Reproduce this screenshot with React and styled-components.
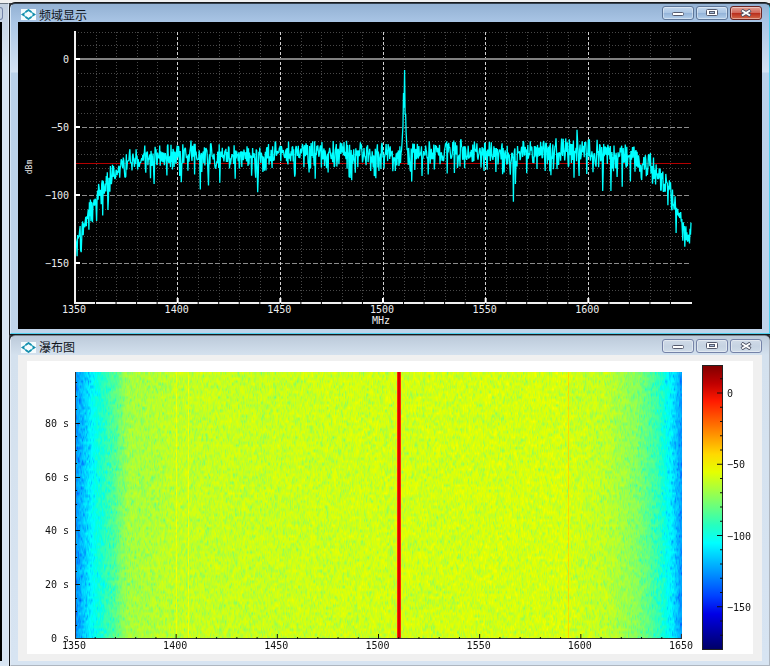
import React, { useEffect, useRef } from "react";
import styled, { createGlobalStyle } from "styled-components";

const GlobalStyle = createGlobalStyle`
  * {
    box-sizing: border-box;
  }

  body {
    margin: 0;
    background: #3c4046;
  }
`;

const Desktop = styled.div`
  display: grid;
  grid-template-columns: 9px minmax(0, 1fr);
  gap: 1px;
  border-top: 3px solid #f0f0f0;
`;

// The window on the left, only its right border is in view
const Neighbour = styled.div`
  display: flex;
  flex-direction: column;
  border-top: 1px solid #6b7682;
  border-right: 1px solid #dfe9f5;
  background: linear-gradient(180deg, #c3d0e0, #d8e5f3 60px);
`;

const NeighbourButton = styled.div`
  width: 3px;
  height: 13px;
  margin-top: 3px;
  border: 1px solid #7484a8;
  border-left: 0;
  border-radius: 0 3px 3px 0;
`;

const NeighbourBody = styled.div`
  flex: 1;
  width: 2px;
  margin: 2px 0 5px;
  background: #000;
`;

const Windows = styled.div`
  display: flex;
  flex-direction: column;
  gap: 1px;
`;

const Frame = styled.section`
  padding: 0 7px 4px;
  border: 1px solid ${({ $active }) => ($active ? "#4fd0ee" : "#aeb6c0")};
  border-top: 1px solid ${({ $active }) => ($active ? "#35424f" : "#7b858f")};
  border-left-color: ${({ $active }) => ($active ? "#d5e6f7" : "#e3ebf4")};
  border-radius: 5px 5px 0 0;
  outline: 1px solid #17191c;
  background: ${({ $active }) =>
    $active
      ? "linear-gradient(180deg, #93b1d3 0, #a9c5e5 18px, #d3e2f3 68px, #b9d1ea 69px, #bfd4ea 100%)"
      : "linear-gradient(180deg, #bccada 0, #d4e1ee 19px, #d7e4f2 100%)"};
`;

const TitleBar = styled.header`
  display: flex;
  align-items: center;
  gap: 3px;
  height: ${({ $active }) => ($active ? 18 : 19)}px;
  padding-left: 3px;
`;

const Title = styled.h1`
  flex: 1;
  margin: 0;
  padding-top: 5px;
  color: #10151c;
  font: 400 12px/14px "Liberation Sans", "Noto Sans CJK SC", sans-serif;
`;

const Logo = styled.svg`
  width: 15px;
  height: 11px;
  margin-top: 3px;
  background: #f4fbfd;
`;

const Controls = styled.div`
  display: flex;
  gap: 2px;
`;

const ControlButton = styled.button`
  display: flex;
  align-items: center;
  justify-content: center;
  width: 32px;
  height: 14px;
  padding: 0;
  border: 1px solid
    ${({ $active, $close }) => ($close && $active ? "#6b2422" : $active ? "#5d7699" : "#7583a8")};
  border-radius: 3px;
  background: ${({ $active, $close }) =>
    $close && $active
      ? "linear-gradient(180deg, #e0a094 0, #d1675a 48%, #b92d1c 52%, #d2694a 100%)"
      : $active
      ? "linear-gradient(180deg, #c3d7ee 0, #abc6e4 48%, #93b3d8 52%, #b4cfeb 100%)"
      : "linear-gradient(180deg, #d0dbe8 0, #c6d3e2 50%, #cfdbe8 100%)"};
  box-shadow: inset 0 0 0 1px rgba(255, 255, 255, 0.4);
`;

const PlotArea = styled.div`
  background: #000;
`;

const WaterfallArea = styled.div`
  padding: 6px 9px 7px;
  background: #f0f0f0;
`;

const Chart = styled.svg`
  display: block;
  width: 100%;
  height: auto;
  background: ${({ $light }) => ($light ? "#fff" : "#000")};
`;

const Label = styled.text`
  fill: ${({ $light }) => ($light ? "#111" : "#eee")};
  font-family: "DejaVu Sans Mono", "Liberation Mono", monospace;
  font-size: ${({ $small }) => ($small ? 8 : 10)}px;
`;

const HeatCanvas = styled.canvas`
  display: block;
  width: 100%;
  height: 100%;
`;

const createRandom = (start) => {
  let seed = start;
  return () => {
    seed = (seed * 1664525 + 1013904223) % 4294967296;
    return seed / 4294967296;
  };
};

const range = (from, to, step) => {
  const list = [];
  for (let v = from; v <= to; v += step) list.push(v);
  return list;
};

const minus = (value) => String(value).replace("-", "−");

// Noise floor along the band: [MHz, dBm]
const TRACE_FLOOR = [
  [1350, -131], [1353, -127], [1357, -111], [1362, -97], [1367, -86],
  [1372, -76], [1380, -72], [1400, -69], [1430, -70], [1460, -67],
  [1510, -67], [1560, -67], [1590, -65], [1605, -67], [1620, -70],
  [1630, -75], [1636, -86], [1641, -99], [1645, -117], [1648, -131],
  [1650, -126],
];

const HEAT_FLOOR = [
  [1350, -126], [1354, -116], [1360, -101], [1370, -82], [1376, -68],
  [1400, -62], [1430, -61], [1500, -59], [1590, -58], [1612, -62],
  [1628, -74], [1638, -90], [1644, -106], [1650, -126],
];

const floorAt = (table, freq) => {
  const next = table.findIndex(([f]) => f >= freq);
  if (next <= 0) return table[0][1];
  const [f0, v0] = table[next - 1];
  const [f1, v1] = table[next];
  return v0 + ((freq - f0) / (f1 - f0)) * (v1 - v0);
};

// Single readings that stand out: [MHz, dBm]
const SPIKES = [
  [1351, -145], [1358.5, -120], [1363.5, -115], [1366, -111], [1388.5, -92],
  [1406.5, -60], [1411, -96], [1415, -93], [1420.5, -91], [1428, -88],
  [1439, -98], [1467, -88], [1483.5, -87], [1510, -25], [1510.5, -8],
  [1511, -40], [1514, -90], [1519, -86], [1522, -85], [1538, -59],
  [1562, -85], [1563.5, -105], [1564.5, -92], [1594.5, -52], [1595.5, -86],
  [1607, -97], [1611, -97], [1616.5, -94], [1620.5, -90], [1626, -89],
  [1647, -138],
];

const X0 = 57;
const xOf = (freq) => X0 + ((freq - 1350) * 616) / 300;
const yOf = (dbm) => 37 - dbm * 1.36;

const buildTrace = () => {
  const random = createRandom(77);
  const points = [];
  for (let i = 0; i <= 1200; i++) {
    const freq = 1350 + i / 4;
    const dip = Math.log(random() * 0.96 + 0.04) * 6;
    let value = floorAt(TRACE_FLOOR, freq) + 2 + dip + (random() - 0.5) * 12;
    const distance = Math.abs(freq - 1510.4);
    if (distance < 2) value = Math.max(value, -32 - distance * 26);
    const spike = SPIKES.find(([f]) => f === freq);
    if (spike) value = spike[1];
    points.push(`${xOf(freq).toFixed(1)},${yOf(value).toFixed(1)}`);
  }
  return points.join(" ");
};

const TRACE = buildTrace();

const channel = (v) => Math.round(255 * Math.max(0, Math.min(1, v)));

const jet = (dbm) => {
  const t = (dbm + 180) / 200;
  return [
    channel(Math.min(4 * t - 1.6, 4.5 - 4 * t)),
    channel(Math.min(4 * t - 0.5, 3.6 - 4 * t)),
    channel(Math.min(4 * t + 0.4, 2.5 - 4 * t)),
  ];
};

const WindowFrame = ({ title, active, children }) => (
  <Frame $active={active} aria-label={title}>
    <TitleBar $active={active}>
      <Logo viewBox="0 0 15 11" aria-hidden="true">
        <path d="M7.5 1 13.5 5.5 7.5 10 1.5 5.5Z" fill="none" stroke="#4cbccd" strokeWidth="1.3" />
        <path d="M4.5 3 7.5 1 10.5 3M4.5 8 7.5 10 10.5 8" fill="none" stroke="#178fae" strokeWidth="1.6" />
        <path d="M0 5.5 3.4 3.4V7.6ZM15 5.5 11.6 3.4V7.6Z" fill="#168bab" />
      </Logo>
      <Title>{title}</Title>
      <Controls>
        <ControlButton type="button" aria-label="最小化" $active={active}>
          <svg width="12" height="10" viewBox="0 0 12 10">
            <rect x=".5" y="4.5" width="11" height="3" rx="1" fill="#fff" stroke="#555b6e" />
          </svg>
        </ControlButton>
        <ControlButton type="button" aria-label="最大化" $active={active}>
          <svg width="12" height="8" viewBox="0 0 12 8">
            <rect x=".5" y=".5" width="11" height="6" rx="1" fill="#fff" stroke="#555b6e" />
            <rect x="3.5" y="2.5" width="5" height="2" fill="#a9bdd8" stroke="#555b6e" />
          </svg>
        </ControlButton>
        <ControlButton type="button" aria-label="关闭" $active={active} $close>
          <svg width="12" height="8" viewBox="0 0 12 8">
            <path d="M1.5 1.2 10.5 6.8M10.5 1.2 1.5 6.8" stroke="#4b5165" strokeWidth="3.6" />
            <path d="M2 1.5 10 6.5M10 1.5 2 6.5" stroke="#fff" strokeWidth="1.9" />
          </svg>
        </ControlButton>
      </Controls>
    </TitleBar>
    {children}
  </Frame>
);

const Spectrum = () => (
  <PlotArea>
    <Chart viewBox="0 0 744 307" role="img" aria-label="频域显示">
      <g stroke="#484848" strokeDasharray="1 2">
        {range(1360, 1640, 10)
          .filter((f) => f % 50 !== 0)
          .map((f) => (
            <line key={f} x1={Math.round(xOf(f)) + 0.5} x2={Math.round(xOf(f)) + 0.5} y1="10" y2="280" />
          ))}
        {range(-170, 20, 10)
          .filter((v) => v % 50 !== 0)
          .map((v) => (
            <line key={v} x1={X0} x2="673" y1={Math.round(yOf(v)) + 0.5} y2={Math.round(yOf(v)) + 0.5} />
          ))}
      </g>
      {range(-150, -50, 50).map((v) => (
        <line key={v} x1={X0} x2="673" y1={yOf(v) + 0.5} y2={yOf(v) + 0.5} stroke="#8c8c8c" strokeDasharray="5 2" />
      ))}
      {range(1400, 1600, 50).map((f) => (
        <line
          key={f}
          x1={Math.floor(xOf(f)) + 0.5}
          x2={Math.floor(xOf(f)) + 0.5}
          y1="10"
          y2="280"
          stroke="#d0d0d0"
          strokeDasharray="3 2"
        />
      ))}
      <line x1={X0} x2="673" y1="37" y2="37" stroke="#808080" strokeWidth="2" />
      <line x1={X0} x2="673" y1="141.5" y2="141.5" stroke="#b40000" />
      <polyline points={TRACE} fill="none" stroke="#00ffff" strokeWidth="1.3" strokeLinejoin="bevel" />

      {/* axes */}
      <path d="M57 9V281M56 281H674" stroke="#f0f0f0" strokeWidth="2" />
      {range(1360, 1640, 10).map((f) => (
        <line key={f} x1={xOf(f)} x2={xOf(f)} y1="280" y2="283" stroke="#000" />
      ))}
      {range(-150, 0, 50).map((v) => (
        <g key={v}>
          <line x1={X0} x2="62" y1={yOf(v)} y2={yOf(v)} stroke="#fff" strokeWidth="2" />
          <Label x="51" y={yOf(v) + 4} textAnchor="end">
            {minus(v)}
          </Label>
        </g>
      ))}
      {range(1350, 1600, 50).map((f) => (
        <g key={f}>
          {f > 1350 && <line x1={xOf(f)} x2={xOf(f)} y1="276" y2="281" stroke="#fff" strokeWidth="2" />}
          <Label x={xOf(f) - 1} y="291" textAnchor="middle">
            {f}
          </Label>
        </g>
      ))}
      <Label x="363" y="302" textAnchor="middle">
        MHz
      </Label>
      <Label $small transform="translate(14 145) rotate(-90)" textAnchor="middle">
        dBm
      </Label>
    </Chart>
  </PlotArea>
);

const HeatMap = () => {
  const ref = useRef();

  useEffect(() => {
    const canvas = ref.current;
    const ctx = canvas.getContext("2d");
    const { width, height } = canvas;
    const image = ctx.createImageData(width, height);
    const random = createRandom(2024);

    for (let y = 0; y < height; y++) {
      let smooth = 0;
      for (let x = 0; x < width; x++) {
        const freq = 1350 + (x * 300) / width;
        const noise = Math.log(random() * 0.98 + 0.02) * 6 + 5 + (random() - 0.5) * 7;
        smooth = smooth * 0.35 + noise * 0.7;
        let value = Math.min(floorAt(HEAT_FLOOR, freq) + smooth, -49);
        if (x === 101 || x === 113) value = Math.max(value, -56 + random() * 6);
        if (x === 493) value = -44 + random() * 4;
        // carrier
        if (x === 323 || x === 324) value = 2;
        if (x === 322 || x === 325) value = -8;

        const [r, g, b] = jet(value);
        const at = (y * width + x) * 4;
        image.data[at] = r;
        image.data[at + 1] = g;
        image.data[at + 2] = b;
        image.data[at + 3] = 255;
      }
    }
    ctx.putImageData(image, 0, 0);
  }, []);

  return <HeatCanvas ref={ref} width={607} height={100} />;
};

const wx = (freq) => 48 + ((freq - 1350) * 607) / 300;
const wy = (seconds) => 277 - seconds * 2.69;
const barY = (dbm) => 32 - dbm * 1.425;

const Waterfall = () => (
  <WaterfallArea>
    <Chart $light viewBox="0 0 726 293" role="img" aria-label="瀑布图">
      <defs>
        <linearGradient id="jet" x1="0" y1="1" x2="0" y2="0">
          {range(0, 16, 1).map((i) => (
            <stop key={i} offset={i / 16} stopColor={`rgb(${jet(-180 + i * 12.5).join(",")})`} />
          ))}
        </linearGradient>
      </defs>
      <foreignObject x="48" y="11" width="607" height="267">
        <HeatMap />
      </foreignObject>
      <path d="M48.5 11V278M48 277.5H655M654.5 273V278" fill="none" stroke="#333" />
      <g stroke="#111">
        {range(5, 95, 5).map((s) => (
          <line key={s} x1="48" x2={s % 20 ? 50 : 53} y1={Math.round(wy(s)) + 0.5} y2={Math.round(wy(s)) + 0.5} />
        ))}
        {range(1360, 1640, 10).map((f) => (
          <line key={f} x1={wx(f)} x2={wx(f)} y1={f % 50 ? 276 : 273} y2="278" />
        ))}
      </g>
      {range(0, 80, 20).map((s) => (
        <Label key={s} $light x="42" y={wy(s) + 4} textAnchor="end">
          {s} s
        </Label>
      ))}
      {range(1350, 1650, 50).map((f) => (
        <Label key={f} $light x={wx(f) - 1} y="288" textAnchor="middle">
          {f}
        </Label>
      ))}
      <rect x="675.5" y="4.5" width="20" height="284" fill="url(#jet)" stroke="#222" />
      {range(-170, 10, 10).map((v) => (
        <line key={v} x1={v % 50 ? 693 : 690} x2="696" y1={barY(v)} y2={barY(v)} stroke="#111" />
      ))}
      {range(-150, 0, 50).map((v) => (
        <Label key={v} $light x="700" y={barY(v) + 4}>
          {minus(v)}
        </Label>
      ))}
    </Chart>
  </WaterfallArea>
);

const App = () => {
  return (
    <>
      <GlobalStyle />
      <Desktop>
        <Neighbour>
          <NeighbourButton />
          <NeighbourBody />
        </Neighbour>
        <Windows>
          <WindowFrame title="频域显示" active>
            <Spectrum />
          </WindowFrame>
          <WindowFrame title="瀑布图">
            <Waterfall />
          </WindowFrame>
        </Windows>
      </Desktop>
    </>
  );
};

export default App;
